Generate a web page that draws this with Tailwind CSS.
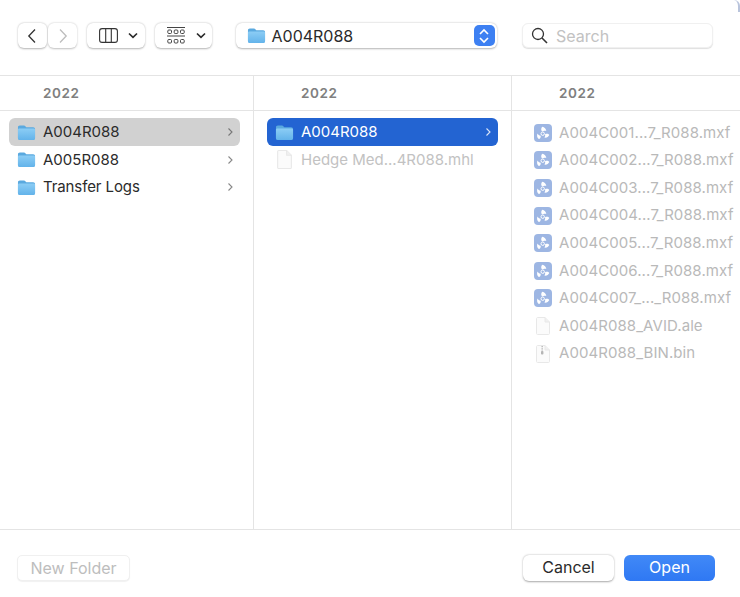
<!DOCTYPE html>
<html lang="en">
<head>
  <meta charset="UTF-8" />
  <title>Open</title>
  <script src="https://cdn.jsdelivr.net/npm/@tailwindcss/browser@4"></script>
</head>
<body class="w-[740px] h-[597px] overflow-hidden bg-white font-['Inter',sans-serif] text-[15px] text-[#2b2b2b]">
  <svg width="0" height="0" class="absolute">
    <defs>
      <linearGradient id="fg" x1="0" y1="0" x2="0" y2="1"><stop offset="0" stop-color="#8ccdf5"/><stop offset="1" stop-color="#63b3ea"/></linearGradient>
      <symbol id="folder" viewBox="0 0 20 17">
        <path d="M1 3.2C1 2 1.8 1.2 3 1.2h4.3c.8 0 1.2.3 1.7.9l.8.9H17c1.2 0 2 .8 2 2v9.4c0 1.2-.8 2-2 2H3c-1.2 0-2-.8-2-2z" fill="#5aa9df"/>
        <path d="M1 5.6c0-.8.6-1.400 1.400-1.400h15.200c.8 0 1.400.6 1.400 1.400v8.800c0 1.200-.8 2-2 2H3c-1.200 0-2-.8-2-2z" fill="url(#fg)"/>
      </symbol>
      <symbol id="doc" viewBox="0 0 16 18">
        <path d="M1.500 1.500C1.500 1 2 .5 2.500 .5H10l4.500 4.500V16.500c0 .6-.4 1-1 1h-11c-.6 0-1-.4-1-1z" fill="#fbfbfb" stroke="#e8e8e8"/>
        <path d="M10 .5V5h4.500" fill="#f0f0f0" stroke="#e8e8e8"/>
      </symbol>
      <symbol id="zip" viewBox="0 0 16 18">
        <path d="M1.500 1.500C1.500 1 2 .5 2.500 .5H10l4.500 4.500V16.500c0 .6-.4 1-1 1h-11c-.6 0-1-.4-1-1z" fill="#fbfbfb" stroke="#e8e8e8"/>
        <path d="M10 .5V5h4.500" fill="#f0f0f0" stroke="#e8e8e8"/>
        <path d="M7.200 1v5" stroke="#bdbdbd" stroke-width="1.600" stroke-dasharray="1 .7"/>
        <rect x="6" y="6" width="2.400" height="3.500" rx=".8" fill="#b5b5b5"/>
      </symbol>
      <symbol id="mxf" viewBox="0 0 18 18">
        <rect width="18" height="18" rx="4" fill="#9db6e3"/>
        <g fill="#fff">
          <path d="M8 7.500C6.800 6 7 3.800 8.300 2.800c2.200.3 3.800 2 4 4.200-1.200-.6-2.800-.4-4.300.5z"/>
          <path d="M11 10.200c1.700-.8 3.500-.6 4.300.8-.9 2-2.900 3-5 2.500.9-1 1.100-2.200.7-3.300z"/>
          <path d="M6.700 11.700c.2 1.600-.5 3-1.900 3.400-1.600-1.300-2.200-3.600-1.300-5.700.5 1.100 1.800 2 3.200 2.300z"/>
        </g>
        <circle cx="8.700" cy="9.700" r="1.700" fill="none" stroke="#fff" stroke-width="1"/>
      </symbol>
      <symbol id="chev" viewBox="0 0 8 10">
        <path d="M2.500 1.500 6 5 2.500 8.500" fill="none" stroke="currentColor" stroke-width="1.100"/>
      </symbol>
      <symbol id="down" viewBox="0 0 10 7">
        <path d="M1 1.500 5 5.300 9 1.500" fill="none" stroke="#2b2b2b" stroke-width="1.700"/>
      </symbol>
    </defs>
  </svg>

  <!-- toolbar -->
  <div class="h-[76px] flex items-start pt-[23px] border-b border-[#e4e4e4] pl-[18px] relative">
    <div class="flex gap-[1.500px]">
      <button class="w-[28.500px] h-[25px] rounded-[6px] bg-white shadow-[0_0.5px_2px_rgba(0,0,0,0.3)] flex items-center justify-center">
        <svg width="10" height="16" viewBox="0 0 10 16"><path d="M8 1.500 1.800 8 8 14.500" fill="none" stroke="#333" stroke-width="1.300"/></svg>
      </button>
      <button class="w-[29px] h-[25px] rounded-[6px] bg-white shadow-[0_0.5px_2px_rgba(0,0,0,0.25)] flex items-center justify-center">
        <svg width="10" height="16" viewBox="0 0 10 16"><path d="M2 1.500 8.200 8 2 14.500" fill="none" stroke="#bdbdbd" stroke-width="1.300"/></svg>
      </button>
    </div>
    <button class="ml-[9.500px] w-[58.500px] h-[25px] rounded-[6px] bg-white shadow-[0_0.5px_2px_rgba(0,0,0,0.3)] flex items-center pl-[12.500px] gap-[10px]">
      <svg width="19" height="15" viewBox="0 0 19 15"><rect x=".6" y=".6" width="17.800" height="13.800" rx="2.500" fill="none" stroke="#333" stroke-width="1.100"/><path d="M6.700 1v13M12.300 1v13" stroke="#333" stroke-width="1.100"/></svg>
      <svg width="10" height="7"><use href="#down"/></svg>
    </button>
    <button class="ml-[9.500px] w-[57px] h-[25px] rounded-[6px] bg-white shadow-[0_0.5px_2px_rgba(0,0,0,0.3)] flex items-center pl-[12px] gap-[11px]">
      <svg width="18" height="18" viewBox="0 0 18 18" fill="none" stroke="#444" stroke-width="1"><path d="M0 .5h18M0 9h18"/><rect x=".8" y="3" width="3.700" height="3.500" rx="1"/><rect x="7.200" y="3" width="3.700" height="3.500" rx="1"/><rect x="13.500" y="3" width="3.700" height="3.500" rx="1"/><rect x=".8" y="12.500" width="3.700" height="3.500" rx="1"/><rect x="7.200" y="12.500" width="3.700" height="3.500" rx="1"/><rect x="13.500" y="12.500" width="3.700" height="3.500" rx="1"/></svg>
      <svg width="10" height="7"><use href="#down"/></svg>
    </button>
    <div class="ml-[24.500px] w-[261px] h-[25px] rounded-[6px] bg-white shadow-[0_0.5px_2px_rgba(0,0,0,0.3)] flex items-center pl-[10.500px] pr-[2.500px]">
      <svg width="19" height="17"><use href="#folder"/></svg>
      <span class="ml-[6px] text-[16px] flex-1">A004R088</span>
      <span class="w-[21px] h-[21px] rounded-[5px] bg-[#3d80f2] flex items-center justify-center">
        <svg width="12" height="16" viewBox="0 0 12 16" fill="none" stroke="#fff" stroke-width="1.600"><path d="M2 6 6 2l4 4M2 10l4 4 4-4"/></svg>
      </span>
    </div>
    <div class="ml-[25px] w-[191px] h-[25px] rounded-[6px] bg-white border border-[#f0f0f0] shadow-[0_1px_1px_rgba(0,0,0,0.13)] flex items-center pl-[8px]">
      <svg width="17" height="17" viewBox="0 0 17 17" fill="none" stroke="#333" stroke-width="1.300"><circle cx="7" cy="7" r="5.500"/><path d="m11 11 5 5" stroke-width="1.600"/></svg>
      <span class="ml-[8px] text-[#c2c2c2] text-[16px]">Search</span>
    </div>
    <div class="absolute right-0 top-0 w-[6px] h-[12px] rounded-tr-[10px] border-r-2 border-[#8a9cc4]/60"></div>
  </div>

  <!-- columns -->
  <div class="flex h-[454px] border-b border-[#e4e4e4]">
    <div class="w-[254px] border-r border-[#e4e4e4]">
      <div class="h-[35px] border-b border-[#e4e4e4] pl-[43px] flex items-center text-[13.500px] font-semibold text-[#808080] tracking-[0.6px]">2022</div>
      <div class="pt-[7px] pl-[9px] pr-[13px]">
        <div class="h-[28px] rounded-[6px] bg-[#d1d1d1] flex items-center pl-[8px] pr-[6px]">
          <svg width="19" height="17"><use href="#folder"/></svg>
          <span class="ml-[7px] flex-1">A004R088</span>
          <svg width="8" height="10" class="text-[#777]"><use href="#chev"/></svg>
        </div>
        <div class="h-[27.600px] flex items-center pl-[8px] pr-[6px]">
          <svg width="19" height="17"><use href="#folder"/></svg>
          <span class="ml-[7px] flex-1">A005R088</span>
          <svg width="8" height="10" class="text-[#888]"><use href="#chev"/></svg>
        </div>
        <div class="h-[27.600px] flex items-center pl-[8px] pr-[6px]">
          <svg width="19" height="17"><use href="#folder"/></svg>
          <span class="ml-[7px] flex-1 tracking-[-0.1px]">Transfer Logs</span>
          <svg width="8" height="10" class="text-[#888]"><use href="#chev"/></svg>
        </div>
      </div>
    </div>
    <div class="w-[258px] border-r border-[#e4e4e4]">
      <div class="h-[35px] border-b border-[#e4e4e4] pl-[47px] flex items-center text-[13.500px] font-semibold text-[#808080] tracking-[0.6px]">2022</div>
      <div class="pt-[7px] pl-[13px] pr-[13px]">
        <div class="h-[28px] rounded-[6px] bg-[#2364d2] flex items-center pl-[8px] pr-[6px] text-white">
          <svg width="19" height="17"><use href="#folder"/></svg>
          <span class="ml-[7px] flex-1">A004R088</span>
          <svg width="8" height="10" class="text-[#dce6f8]"><use href="#chev"/></svg>
        </div>
        <div class="h-[27.600px] flex items-center pl-[9px] text-[#c2c2c2]">
          <svg width="17" height="19"><use href="#doc"/></svg>
          <span class="ml-[8px]">Hedge Med...4R088.mhl</span>
        </div>
      </div>
    </div>
    <div class="flex-1">
      <div class="h-[35px] border-b border-[#e4e4e4] pl-[47px] flex items-center text-[13.500px] font-semibold text-[#808080] tracking-[0.6px]">2022</div>
      <div class="pt-[8px] pl-[21.500px] text-[#b9b9b9] tracking-[0.07px]">
        <div class="h-[27.600px] flex items-center"><svg width="18" height="18"><use href="#mxf"/></svg><span class="ml-[7.500px]">A004C001...7_R088.mxf</span></div>
        <div class="h-[27.600px] flex items-center"><svg width="18" height="18"><use href="#mxf"/></svg><span class="ml-[7.500px]">A004C002...7_R088.mxf</span></div>
        <div class="h-[27.600px] flex items-center"><svg width="18" height="18"><use href="#mxf"/></svg><span class="ml-[7.500px]">A004C003...7_R088.mxf</span></div>
        <div class="h-[27.600px] flex items-center"><svg width="18" height="18"><use href="#mxf"/></svg><span class="ml-[7.500px]">A004C004...7_R088.mxf</span></div>
        <div class="h-[27.600px] flex items-center"><svg width="18" height="18"><use href="#mxf"/></svg><span class="ml-[7.500px]">A004C005...7_R088.mxf</span></div>
        <div class="h-[27.600px] flex items-center"><svg width="18" height="18"><use href="#mxf"/></svg><span class="ml-[7.500px]">A004C006...7_R088.mxf</span></div>
        <div class="h-[27.600px] flex items-center"><svg width="18" height="18"><use href="#mxf"/></svg><span class="ml-[7.500px]">A004C007_..._R088.mxf</span></div>
        <div class="h-[27.600px] flex items-center"><svg width="18" height="18"><use href="#doc"/></svg><span class="ml-[7.500px]">A004R088_AVID.ale</span></div>
        <div class="h-[27.600px] flex items-center"><svg width="18" height="18"><use href="#zip"/></svg><span class="ml-[7.500px]">A004R088_BIN.bin</span></div>
      </div>
    </div>
  </div>

  <!-- footer -->
  <div class="h-[67px] flex items-center pr-[25px] pl-[17px] pt-[9px]">
    <button class="w-[113px] h-[26px] pb-[2px] rounded-[5px] bg-white border border-[#f0f0f0] shadow-[0_1px_1px_rgba(0,0,0,0.06)] text-[#bdbdbd] text-[16px]">New Folder</button>
    <button class="ml-auto w-[91px] h-[26px] pb-[2px] rounded-[6px] bg-white shadow-[0_0.5px_2px_rgba(0,0,0,0.35)] text-[#2b2b2b] text-[16px]">Cancel</button>
    <button class="ml-[10px] w-[91px] h-[26px] pb-[2px] rounded-[6px] bg-gradient-to-b from-[#4189f7] to-[#2f78f3] text-white text-[16px]">Open</button>
  </div>
</body>
</html>
